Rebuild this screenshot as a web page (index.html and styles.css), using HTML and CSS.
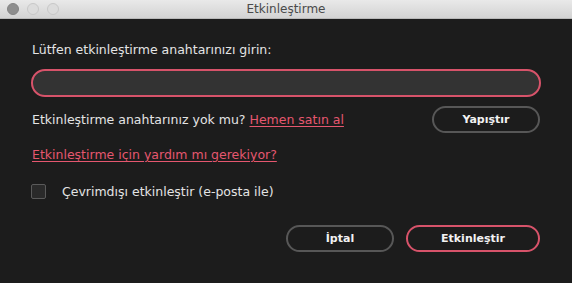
FILE: index.html
```html
<!DOCTYPE html>
<html lang="tr">
<head>
<meta charset="utf-8">
<title>Etkinleştirme</title>
<link rel="stylesheet" href="styles.css">
</head>
<body>
<div class="window">
  <div class="titlebar">
    <div class="lights">
      <span class="light light-close"></span>
      <span class="light"></span>
      <span class="light"></span>
    </div>
    <div class="title">Etkinleştirme</div>
  </div>
  <div class="content">
    <div class="label">Lütfen etkinleştirme anahtarınızı girin:</div>
    <div class="input"></div>
    <div class="row">
      <div class="text">Etkinleştirme anahtarınız yok mu? <a class="link" href="#">Hemen satın al</a></div>
      <button class="btn btn-grey btn-paste">Yapıştır</button>
    </div>
    <div class="help"><a class="link" href="#">Etkinleştirme için yardım mı gerekiyor?</a></div>
    <div class="check-row">
      <span class="checkbox"></span>
      <span class="text">Çevrimdışı etkinleştir (e-posta ile)</span>
    </div>
    <div class="actions">
      <button class="btn btn-grey btn-cancel">İptal</button>
      <button class="btn btn-primary">Etkinleştir</button>
    </div>
  </div>
</div>
</body>
</html>
```
FILE: styles.css
```css
html, body {
  margin: 0;
  padding: 0;
  background: #1c1c1c;
}
body {
  font-family: "DejaVu Sans", "Liberation Sans", sans-serif;
  width: 572px;
  height: 283px;
  overflow: hidden;
}
.window {
  display: flex;
  flex-direction: column;
  height: 283px;
}
.titlebar {
  height: 19px;
  flex: 0 0 19px;
  background: linear-gradient(#e9e9e9, #d3d3d3);
  border-bottom: 1px solid #b9b9b9;
  box-sizing: border-box;
  display: flex;
  align-items: center;
  position: relative;
}
.lights {
  display: flex;
  gap: 8px;
  padding-left: 7px;
}
.light {
  width: 12px;
  height: 12px;
  border-radius: 50%;
  box-sizing: border-box;
  background: #dcdcdc;
  border: 1px solid #c8c8c8;
}
.light-close {
  background: #8e8e8e;
  border-color: #848484;
}
.title {
  position: absolute;
  left: 0;
  right: 0;
  text-align: center;
  font-size: 12px;
  color: #4a4a4a;
  top: 2px;
}
.content {
  padding: 23px 32px 0 32px;
  color: #e4e4e4;
  font-size: 12.5px;
  line-height: 15px;
}
.label {
  line-height: 15px;
}
.input {
  margin-top: 12px;
  margin-left: -1px;
  height: 28px;
  box-sizing: border-box;
  border: 2px solid #d7536a;
  border-radius: 14px;
  background: #333;
  width: 510px;
}
.row {
  margin-top: 9px;
  display: flex;
  align-items: center;
  justify-content: space-between;
}
.link {
  color: #e5576f;
  text-decoration: underline;
  text-underline-offset: 2px;
}
.btn {
  font-family: "DejaVu Sans", sans-serif;
  font-weight: bold;
  font-size: 11px;
  color: #f2f2f2;
  background: #1c1c1c;
  height: 27px;
  border-radius: 14px;
  box-sizing: border-box;
  padding: 0;
}
.btn-grey {
  border: 2px solid #575757;
}
.btn-paste {
  width: 108px;
}
.help {
  margin-top: 14px;
  line-height: 15px;
}
.check-row {
  margin-top: 22px;
  display: flex;
  align-items: center;
  gap: 16px;
  margin-left: -1px;
}
.checkbox {
  width: 15px;
  height: 15px;
  box-sizing: border-box;
  border: 1px solid #5a5a5a;
  border-radius: 2px;
  background: #2a2a2a;
}
.actions {
  margin-top: 26px;
  display: flex;
  justify-content: flex-end;
  gap: 12px;
}
.btn-cancel {
  width: 108px;
}
.btn-primary {
  width: 134px;
  border: 2px solid #d7536a;
}
```
